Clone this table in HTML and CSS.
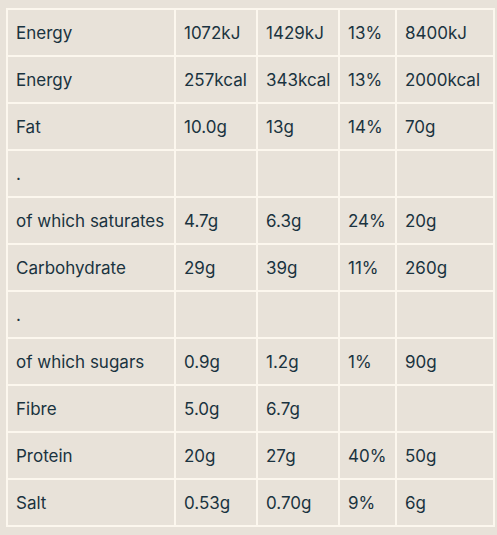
FILE: index.html
```html
<!DOCTYPE html>
<html lang="en">
<head>
    <meta charset="UTF-8">
    <meta name="viewport" content="width=device-width, initial-scale=1.0">
    <title>Nutrition</title>
    <link rel="stylesheet" href="styles.css">
</head>
<body>
    <!-- Tabla nutricional -->
    <table class="nutrition">
        <colgroup>
            <col class="c-name">
            <col class="c-a">
            <col class="c-b">
            <col class="c-pct">
            <col class="c-ri">
        </colgroup>
        <tr><td>Energy</td><td>1072kJ</td><td>1429kJ</td><td>13%</td><td>8400kJ</td></tr>
        <tr><td>Energy</td><td>257kcal</td><td>343kcal</td><td>13%</td><td>2000kcal</td></tr>
        <tr><td>Fat</td><td>10.0g</td><td>13g</td><td>14%</td><td>70g</td></tr>
        <tr><td>.</td><td></td><td></td><td></td><td></td></tr>
        <tr><td>of which saturates</td><td>4.7g</td><td>6.3g</td><td>24%</td><td>20g</td></tr>
        <tr><td>Carbohydrate</td><td>29g</td><td>39g</td><td>11%</td><td>260g</td></tr>
        <tr><td>.</td><td></td><td></td><td></td><td></td></tr>
        <tr><td>of which sugars</td><td>0.9g</td><td>1.2g</td><td>1%</td><td>90g</td></tr>
        <tr><td>Fibre</td><td>5.0g</td><td>6.7g</td><td></td><td></td></tr>
        <tr><td>Protein</td><td>20g</td><td>27g</td><td>40%</td><td>50g</td></tr>
        <tr><td>Salt</td><td>0.53g</td><td>0.70g</td><td>9%</td><td>6g</td></tr>
    </table>
</body>
</html>
```

FILE: styles.css
```css
/* Estilos generales */
body {
    margin: 0;
    background-color: #e8e2d9;
    font-family: Inter, "Noto Sans", sans-serif;
    color: #1a3340;
}

/* Tabla nutricional */
.nutrition {
    border-collapse: collapse;
    table-layout: fixed;
    width: 487px;
    margin: 8px 0 0 6px;
    border: 2px solid #fcf7ee;
    font-size: 17px;
}

.nutrition td {
    border: 2px solid #fcf7ee;
    height: 45px;
    padding: 0 0 0 8px;
    vertical-align: middle;
    white-space: nowrap;
}

.c-name { width: 168px; }
.c-a { width: 82px; }
.c-b { width: 82px; }
.c-pct { width: 57px; }
.c-ri { width: 98px; }
```
